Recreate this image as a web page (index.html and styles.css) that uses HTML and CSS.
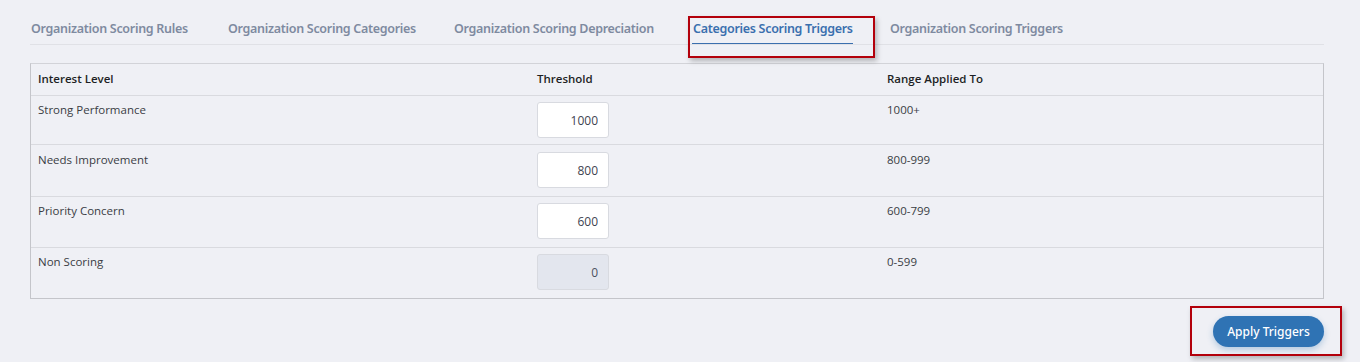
FILE: index.html
```html
<!DOCTYPE html>
<html lang="en">
<head>
<meta charset="utf-8">
<title>Scoring Triggers</title>
<link rel="stylesheet" href="styles.css">
</head>
<body>
<div class="page">
  <nav class="tabs">
    <div class="tab t1">Organization Scoring Rules</div>
    <div class="tab t2">Organization Scoring Categories</div>
    <div class="tab t3">Organization Scoring Depreciation</div>
    <div class="tab t4 active">Categories Scoring Triggers<span class="highlight tab-hl"></span></div>
    <div class="tab t5">Organization Scoring Triggers</div>
  </nav>

  <div class="table">
    <div class="row head">
      <div class="cell">Interest Level</div>
      <div class="cell">Threshold</div>
      <div class="cell">Range Applied To</div>
    </div>
    <div class="row r1">
      <div class="cell">Strong Performance</div>
      <div class="cell"><input class="num" type="text" value="1000"></div>
      <div class="cell">1000+</div>
    </div>
    <div class="row r2">
      <div class="cell">Needs Improvement</div>
      <div class="cell"><input class="num" type="text" value="800"></div>
      <div class="cell">800-999</div>
    </div>
    <div class="row">
      <div class="cell">Priority Concern</div>
      <div class="cell"><input class="num" type="text" value="600"></div>
      <div class="cell">600-799</div>
    </div>
    <div class="row last">
      <div class="cell">Non Scoring</div>
      <div class="cell"><input class="num" type="text" value="0" disabled></div>
      <div class="cell">0-599</div>
    </div>
  </div>

  <div class="actions">
    <button class="btn">Apply Triggers<span class="highlight btn-hl"></span></button>
  </div>
</div>
</body>
</html>
```

FILE: styles.css
```css
* { box-sizing: border-box; }
html, body { margin: 0; padding: 0; }
body {
  background: #eff0f5;
  font-family: "Open Sans", "Liberation Sans", sans-serif;
  width: 1360px;
  height: 362px;
  overflow: hidden;
}
.page {
  padding: 0 36px 0 30px;
}
.tabs {
  display: flex;
  gap: 40px;
  border-bottom: 1px solid #e0e1e6;
  height: 45px;
  padding-left: 1px;
  padding-top: 20px;
}
.tab {
  position: relative;
  flex: none;
  white-space: nowrap;
  font-family: "Noto Sans", sans-serif;
  font-size: 12.5px;
  font-weight: 600;
  color: #7e8aa0;
  letter-spacing: -0.3px;
  height: 24px;
  line-height: 18px;
}
.t1 { width: 157px; }
.t2 { width: 186px; }
.t3 { width: 199px; }
.t4 { width: 157px; }
.t5 { width: 171px; }
.tab.active {
  color: #3a6fae;
}
.tab.active::after {
  content: "";
  position: absolute;
  left: -1px;
  width: 161px;
  bottom: 0;
  border-bottom: 1px solid #3a6fae;
}
.highlight {
  position: absolute;
  border: 2px solid #b3000b;
  box-shadow: 2px 3px 5px rgba(0,0,0,0.25);
  pointer-events: none;
}
.tab-hl {
  left: -5px;
  top: -4px;
  width: 187px;
  height: 42px;
}
.table {
  margin-top: 18px;
  border-top: 1px solid #d2d3d8;
  border-left: 1px solid #c4c5ca;
  border-right: 1px solid #c4c5ca;
  border-bottom: 1px solid #c4c5ca;
}
.row {
  display: grid;
  grid-template-columns: 499px 350px 1fr;
  border-bottom: 1px solid #d9dadf;
  min-height: 51px;
}
.row.head { min-height: 32px; }
.row.r1 { min-height: 49px; }
.row.r2 { min-height: 52px; }
.row.last { border-bottom: none; min-height: 50px; }
.cell {
  padding: 6px 7px;
  font-size: 11.5px;
  color: #3a3d44;
  line-height: 16px;
}
.row.r2 .cell { padding-top: 7px; }
.row.head .cell {
  font-weight: 600;
  color: #1d1f24;
  padding-top: 7px;
}
.num {
  display: block;
  width: 72px;
  height: 36px;
  border: 1px solid #d8dae0;
  border-radius: 3px;
  background: #ffffff;
  text-align: right;
  padding: 0 10px;
  padding-top: 1px;
  font-family: "Open Sans", sans-serif;
  font-size: 12px;
  color: #3d4350;
}
.num:disabled {
  background: #e3e6ee;
  color: #4a5160;
}
.actions {
  display: flex;
  justify-content: flex-end;
  padding-top: 17px;
}
.btn {
  position: relative;
  width: 111px;
  height: 31px;
  border: none;
  border-radius: 16px;
  background: #2f73b4;
  color: #ffffff;
  font-family: "Noto Sans", sans-serif;
  font-size: 12px;
  font-weight: 500;
  box-shadow: 0 3px 6px rgba(47,115,180,0.3);
  padding: 0;
}
.btn-hl {
  left: -23px;
  top: -10px;
  width: 152px;
  height: 50px;
}
```
